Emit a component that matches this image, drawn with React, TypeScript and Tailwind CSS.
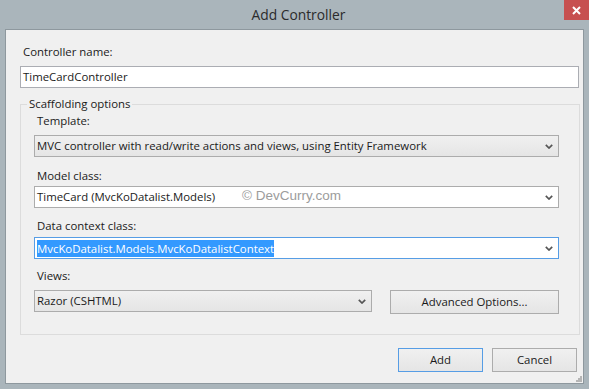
import { ReactNode } from "react";

const ui = "font-['Segoe_UI','Open_Sans',sans-serif] text-[11.4px] leading-[16px] text-[#1a1a1a]";

function Chevron() {
  return (
    <svg width="8" height="5" viewBox="0 0 8 5" className="shrink-0">
      <path d="M0.8 0.8 L4 4 L7.2 0.8" fill="none" stroke="#555" strokeWidth="1.7" />
    </svg>
  );
}

interface ComboProps {
  width: string;
  tone: "gray" | "white" | "focus";
  children: ReactNode;
}

function Combo({ width, tone, children }: ComboProps) {
  return (
    <div
      className={
        width +
        " relative flex h-[22px] items-center justify-between border pl-[2px] pr-[5px] " +
        (tone === "gray"
          ? "border-[#acacac] bg-gradient-to-b from-[#f0f0f0] to-[#e5e5e5]"
          : tone === "white"
            ? "border-[#acacac] bg-white"
            : "border-[#569de5] bg-white")
      }
    >
      <div className="flex items-center">{children}</div>
      <Chevron />
    </div>
  );
}

function Button({ label, focus, width }: { label: string; focus?: boolean; width: string }) {
  return (
    <div
      className={
        width +
        " flex h-[24px] items-center justify-center border bg-gradient-to-b from-[#f0f0f0] to-[#e5e5e5] " +
        (focus ? "border-[#569de5]" : "border-[#acacac]")
      }
    >
      {label}
    </div>
  );
}

function Label({ text, className }: { text: string; className: string }) {
  return <div className={"pl-[3px] " + className}>{text}</div>;
}

export default function App() {
  return (
    <div className={"flex h-[389px] w-[589px] flex-col bg-[#aab5bb] " + ui}>
      <div className="grid h-[29px] shrink-0 grid-cols-[25px_1fr_25px] items-start">
        <div />
        <div className="pl-[8px] text-center text-[13.8px] leading-[29px] text-[#2b2b2b]">Add Controller</div>
        <div className="flex h-[20px] items-center justify-center bg-[#c75050]">
          <svg width="9" height="9" viewBox="0 0 9 9">
            <path d="M1 1 L8 8 M8 1 L1 8" stroke="#fff" strokeWidth="2" />
          </svg>
        </div>
      </div>

      <div className="relative mx-[5px] flex h-[355px] shrink-0 flex-col border border-[#8e989e] bg-[#f0f0f0] pl-[14px] pr-[4px] pt-[14px]">
        <Label text="Controller name:" className="" />
        <div className="mt-[6px] flex h-[22px] w-[559px] items-center border border-[#abadb3] bg-white pl-[2px]">
          TimeCardController
        </div>

        <fieldset className="mt-[8px] w-[560px] border border-[#dcdcdc]">
          <legend className="ml-[6px] px-[2px]">Scaffolding options</legend>

          <div className="pb-[20px] pl-[13px]">
            <Label text="Template:" className="mt-[1px]" />
            <div className="mt-[6px]">
              <Combo width="w-[525px]" tone="gray">
                MVC controller with read/write actions and views, using Entity Framework
              </Combo>
            </div>

            <Label text="Model class:" className="mt-[11px]" />
            <div className="mt-[2px]">
              <Combo width="w-[525px]" tone="white">
                TimeCard (MvcKoDatalist.Models)
                <span className="absolute left-[207px] top-[2px] font-['Liberation_Sans',Arial,sans-serif] text-[13.5px] leading-none text-[#9c9c9c]">
                  © DevCurry.com
                </span>
              </Combo>
            </div>

            <Label text="Data context class:" className="mt-[10px]" />
            <div className="mt-[3px]">
              <Combo width="w-[525px]" tone="focus">
                <span className="bg-[#3399ff] leading-[17px] text-white">MvcKoDatalist.Models.MvcKoDatalistContext</span>
              </Combo>
            </div>

            <Label text="Views:" className="mt-[9px]" />
            <div className="mt-[6px] flex items-start">
              <Combo width="w-[338px]" tone="gray">
                Razor (CSHTML)
              </Combo>
              <div className="ml-[18px]">
                <Button label="Advanced Options..." width="w-[169px]" />
              </div>
            </div>
          </div>
        </fieldset>

        <div className="mt-[13px] flex justify-end gap-[9px] pr-[2px]">
          <Button label="Add" focus width="w-[85px]" />
          <Button label="Cancel" width="w-[85px]" />
        </div>

        <svg width="6" height="6" viewBox="0 0 6 6" className="absolute bottom-[1px] right-[1px]">
          <rect x="4" y="0" width="2" height="2" fill="#b5b5b5" />
          <rect x="2" y="2" width="2" height="2" fill="#b5b5b5" />
          <rect x="4" y="2" width="2" height="2" fill="#b5b5b5" />
          <rect x="0" y="4" width="2" height="2" fill="#b5b5b5" />
          <rect x="2" y="4" width="2" height="2" fill="#b5b5b5" />
          <rect x="4" y="4" width="2" height="2" fill="#b5b5b5" />
        </svg>
      </div>
    </div>
  );
}
